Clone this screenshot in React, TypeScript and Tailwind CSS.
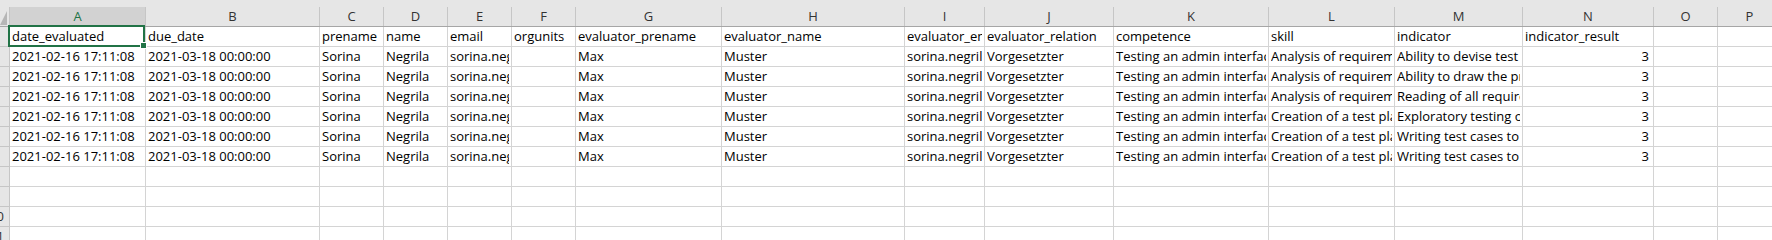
import React from "react";

const cols = [
  { l: "A", w: 136 },
  { l: "B", w: 174 },
  { l: "C", w: 64 },
  { l: "D", w: 64 },
  { l: "E", w: 64 },
  { l: "F", w: 64 },
  { l: "G", w: 146 },
  { l: "H", w: 183 },
  { l: "I", w: 80 },
  { l: "J", w: 129 },
  { l: "K", w: 155 },
  { l: "L", w: 126 },
  { l: "M", w: 128 },
  { l: "N", w: 131 },
  { l: "O", w: 64 },
  { l: "P", w: 64 },
];

const header = [
  "date_evaluated",
  "due_date",
  "prename",
  "name",
  "email",
  "orgunits",
  "evaluator_prename",
  "evaluator_name",
  "evaluator_email",
  "evaluator_relation",
  "competence",
  "skill",
  "indicator",
  "indicator_result",
  "",
  "",
];

const skills = [
  "Analysis of requirements",
  "Analysis of requirements",
  "Analysis of requirements",
  "Creation of a test plan",
  "Creation of a test plan",
  "Creation of a test plan",
];
const indicators = [
  "Ability to devise test cases",
  "Ability to draw the process",
  "Reading of all requirements",
  "Exploratory testing of the app",
  "Writing test cases to cover",
  "Writing test cases to cover",
];

const dataRows: string[][] = skills.map((s, i) => [
  "2021-02-16 17:11:08",
  "2021-03-18 00:00:00",
  "Sorina",
  "Negrila",
  "sorina.negrila",
  "",
  "Max",
  "Muster",
  "sorina.negrila",
  "Vorgesetzter",
  "Testing an admin interface",
  s,
  indicators[i],
  "3",
  "",
  "",
]);

const rows: string[][] = [header, ...dataRows, ...Array.from({ length: 4 }, () => cols.map(() => ""))];

export default function App() {
  return (
    <div
      className="w-[1772px] h-[240px] overflow-hidden bg-white text-black"
      style={{ fontFamily: '"Open Sans", "Liberation Sans", sans-serif' }}
    >
      <div className="w-[1782px]">
        {/* top strip */}
        <div className="h-[7px] bg-[#e6e6e6]" />
        {/* column headers */}
        <div className="flex h-[20px] bg-[#e6e6e6] border-b border-[#a6a6a6]">
          <div className="relative w-[10px] shrink-0 border-r border-[#c6c6c6]">
            <svg className="absolute left-0 top-[3px]" width="8" height="16" viewBox="0 0 8 16">
              <polygon points="7,1 7,15 0,15" fill="#b6b6b6" />
            </svg>
          </div>
          {cols.map((c, i) => (
            <div
              key={c.l}
              className={
                i === 0
                  ? "shrink-0 flex items-center justify-center border-r border-[#c6c6c6] bg-[#d2d2d2] text-[#217346] text-[13px] leading-none"
                  : "shrink-0 flex items-center justify-center border-r border-[#c6c6c6] text-[#333333] text-[13px] leading-none"
              }
              style={{ width: c.w }}
            >
              {c.l}
            </div>
          ))}
        </div>
        {/* rows */}
        {rows.map((r, ri) => (
          <div key={ri} className="flex h-[20px] border-b border-[#d4d4d4]">
            <div className="w-[10px] shrink-0 overflow-hidden flex justify-end items-end pr-[5px] bg-[#e6e6e6] border-r border-[#c6c6c6] text-[13px] leading-[19px] text-[#333333] -mb-px border-b border-b-[#c6c6c6] h-[20px]">
              {ri + 1 >= 10 && <span className="whitespace-nowrap">{ri + 1}</span>}
            </div>
            {cols.map((c, ci) => (
              <div
                key={ci}
                className={
                  "relative shrink-0 border-r border-[#d4d4d4] h-[19px] text-[13px] leading-[19px] px-[2px] whitespace-nowrap " +
                  (ci === 13 && ri > 0 ? "text-right pr-[4px]" : "")
                }
                style={{ width: c.w }}
              >
                <div className="overflow-hidden h-[19px]">{r[ci]}</div>
                {ri === 0 && ci === 0 && (
                  <div className="absolute -top-[2px] -left-[2px] right-0 -bottom-[1px] border-2 border-[#217346] z-10 pointer-events-none">
                    <div className="absolute -right-[4px] -bottom-[4px] w-[7px] h-[7px] bg-[#217346] border border-white" />
                  </div>
                )}
              </div>
            ))}
          </div>
        ))}
      </div>
    </div>
  );
}
